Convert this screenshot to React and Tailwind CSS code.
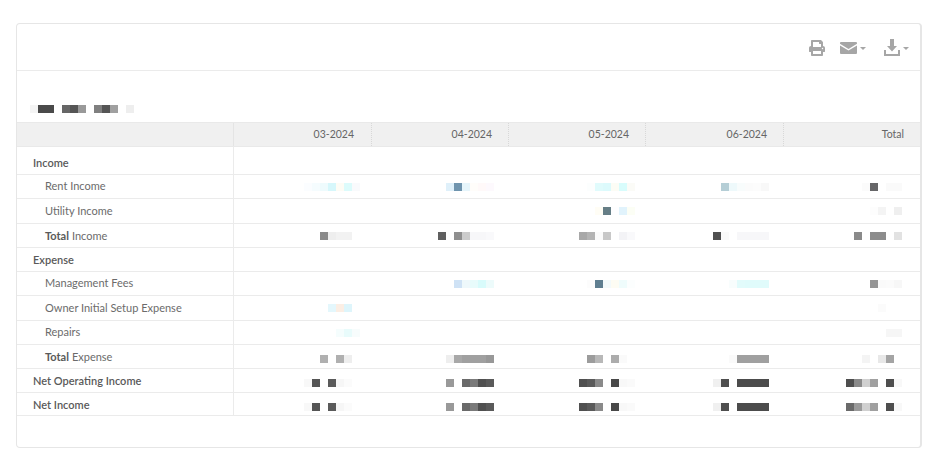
import React from 'react';
import { FaPrint } from 'react-icons/fa';

const rows = [
  { label: 'Income', type: 'section', height: 'h-[28px]', labelPad: 'pt-[5px]' },
  {
    label: 'Rent Income',
    height: 'h-[24px]',
    cells: [
      ['#fbfdff', '#f5fcfe', '#eefbfd', '#d6f7fb', '#fdfcf5', '#dcfbfb', '#f9fafc'],
      ['#dff0fa', '#6f94ae', '#e6f5fb', '#fffdfa', '#fff9f9', '#fdf9fd'],
      ['#fcfefe', '#e0fbfc', '#dcfafc', '#fcfcf5', '#d8fcfc', '#fbfbf7'],
      ['#b5ced6', '#eef9fb', '#f8fcfc', '#fbfbfb', '#fcfcfc', '#f8f8f8'],
      ['#fbfbfb', '#666668', '#ffffff', '#fafafa', '#fafafa'],
    ],
  },
  {
    label: 'Utility Income',
    height: 'h-[25px]',
    cells: [
      [],
      [],
      ['#fffdf5', '#667e86', '#fefeff', '#e1f3fc', '#fcfef5'],
      [],
      ['#fdfdfd', '#f4f4f4', '#ffffff', '#efefef'],
    ],
  },
  {
    label: 'Income',
    total: true,
    height: 'h-[24px]',
    labelPad: 'pt-[1px]',
    cells: [
      ['#8a8a8a', '#eeeeee', '#f2f2f2', '#f2f2f2', ''],
      ['#5f5f5f', '#ffffff', '#8f8f8f', '#cccccc', '#f7f7f9', '#f7f7f9', '#f9f9fb'],
      ['#a8a8a8', '#b4b4b4', '#fbfbfb', '#c8c8c8', '#ffffff', '#f3f3f6', '#f9f9fb'],
      ['#505050', '#fafafa', '#ffffff', '#f7f7f9', '#f7f7f9', '#f7f7f9', '#f7f7f9'],
      ['#8a8a8a', '#ffffff', '#8c8c8c', '#8c8c8c', '#ffffff', '#e2e2e2'],
    ],
  },
  { label: 'Expense', type: 'section', height: 'h-[24px]', labelPad: 'pt-[1px]' },
  {
    label: 'Management Fees',
    height: 'h-[24px]',
    cells: [
      [],
      ['#cfe2f5', '#eef8fb', '#e8fbfb', '#d8fbfb', '#edfbfb'],
      ['#fcfcfc', '#5f7e90', '#f3fafb', '#fdfcf3', '#effcfc', '#fcfefe'],
      ['#f8fdfd', '#e2fbfb', '#e0fbfb', '#e0fbfb', '#e0fbfb'],
      ['#959595', '#fafafa', '#fbfbfb', '#f7f7f7'],
    ],
  },
  {
    label: 'Owner Initial Setup Expense',
    height: 'h-[25px]',
    cells: [['#e4f7fc', '#fbeee4', '#def5fb', ''], [], [], [], ['#fbfbfb', '', '']],
  },
  {
    label: 'Repairs',
    height: 'h-[24px]',
    cells: [['#f5fdfd', '#e8fbfb', '#f7fcfc'], [], [], [], ['#f6f6f6', '#f6f6f6']],
  },
  {
    label: 'Expense',
    total: true,
    height: 'h-[24px]',
    labelPad: 'pt-[1px]',
    cellPad: 'pt-[5px]',
    cells: [
      ['#b0b0b0', '#ffffff', '#b0b0b0', '#eeeeee', ''],
      ['#eeeeee', '#a8a8a8', '#a0a0a0', '#a0a0a0', '#a0a0a0', '#989898'],
      ['#9c9c9c', '#b8b8b8', '#ffffff', '#acacac', '#fafafa', ''],
      ['#fafafa', '#a0a0a0', '#a0a0a0', '#a0a0a0', '#a0a0a0'],
      ['#f4f4f4', '#ffffff', '#e8e8e8', '#a4a4a4', ''],
    ],
  },
  {
    label: 'Net Operating Income',
    type: 'section',
    height: 'h-[24px]',
    labelPad: 'pt-[1px]',
    cellPad: 'pt-[5px]',
    cells: [
      ['#f8f8f8', '#555555', '#ffffff', '#5a5a5a', '#f6f6f6', '#fbfbfb', ''],
      ['#999999', '#ffffff', '#6a6a6a', '#7a7a7a', '#505050', '#5a5a5a'],
      ['#505050', '#5a5a5a', '#8a8a8a', '#ffffff', '#484848', '#f8f8f8', '#fafafa'],
      ['#f0f0f0', '#4e4e4e', '#ffffff', '#4c4c4c', '#4c4c4c', '#4c4c4c', '#4c4c4c'],
      ['#4e4e4e', '#8a8a8a', '#d0d0d0', '#a0a0a0', '#ffffff', '#4e4e4e', '#f8f8f8'],
    ],
  },
  {
    label: 'Net Income',
    type: 'section',
    height: 'h-[23px]',
    labelPad: 'pt-[2px]',
    cellPad: 'pt-[5px]',
    cells: [
      ['#f8f8f8', '#555555', '#ffffff', '#5a5a5a', '#f6f6f6', '#fbfbfb', ''],
      ['#999999', '#ffffff', '#6a6a6a', '#7a7a7a', '#505050', '#5a5a5a'],
      ['#505050', '#5a5a5a', '#8a8a8a', '#ffffff', '#484848', '#f8f8f8', '#fafafa'],
      ['#f0f0f0', '#4e4e4e', '#ffffff', '#4c4c4c', '#4c4c4c', '#4c4c4c', '#4c4c4c'],
      ['#6a6a6a', '#9a9a9a', '#d0d0d0', '#a0a0a0', '#ffffff', '#4e4e4e', '#f8f8f8'],
    ],
  },
];

const columns = ['03-2024', '04-2024', '05-2024', '06-2024', 'Total'];
// blurred figures sit a little differently from the header text in each column
const cellRight = ['pr-[12px]', 'pr-[15px]', 'pr-[11px]', 'pr-[15px]', 'pr-[18px]'];
const headRight = ['pr-[17px]', 'pr-[16px]', 'pr-[16px]', 'pr-[16px]', 'pr-[16px]'];
const gridCols = 'grid grid-cols-[217px_138px_137px_137px_138px_1fr]';

function Mosaic({ colors }) {
  return (
    <div className="flex">
      {colors.map((c, i) => (
        <span key={i} className="block w-[8px] h-[8px]" style={{ backgroundColor: c || 'transparent' }} />
      ))}
    </div>
  );
}

function Caret() {
  return <span className="ml-[3px] mt-[2px] w-0 h-0 border-x-[3px] border-x-transparent border-t-[3px] border-t-[#a6a6a6]" />;
}

function Toolbar() {
  return (
    <div className="h-[47px] border-b border-[#ebebeb] flex items-center justify-end pr-[11px] pt-[1px] text-[#a6a6a6]">
      <FaPrint className="w-[16px] h-[16px]" />
      <div className="flex items-center ml-[15px]">
        <svg width="17" height="12" viewBox="0 0 17 12" fill="currentColor">
          <path d="M1 0h15a1 1 0 0 1 1 1v.8L8.5 7 0 1.800V1a1 1 0 0 1 1-1z" />
          <path d="M0 3.400 8.500 8.600 17 3.400V11a1 1 0 0 1-1 1H1a1 1 0 0 1-1-1z" />
        </svg>
        <Caret />
      </div>
      <div className="flex items-center ml-[18px]">
        <svg width="16" height="17" viewBox="0 0 16 17" fill="currentColor">
          <path d="M6 0h4v7h3l-5 5.500L3 7h3z" />
          <path d="M0 11h2v4h12v-4h2v6H0z" />
        </svg>
        <Caret />
      </div>
    </div>
  );
}

function Row({ row }) {
  const isSection = row.type === 'section';
  return (
    <div className={`${gridCols} ${row.height} box-border border-b border-[#ebebeb]`}>
      <div
        className={`flex items-center border-r border-[#ebebeb] text-[11px] ${row.labelPad || ''} ${
          isSection ? 'pl-[16px] font-semibold text-[#5a5a5a]' : 'pl-[28px] text-[#6b6b6b]'
        }`}
      >
        {row.total && <span className="font-bold text-[#5a5a5a] mr-[3px]">Total</span>}
        {row.label}
      </div>
      {columns.map((col, i) => (
        <div key={col} className={`flex items-center justify-end ${cellRight[i]} ${row.cellPad || ''}`}>
          {row.cells && <Mosaic colors={row.cells[i]} />}
        </div>
      ))}
    </div>
  );
}

export default function App() {
  return (
    <div className="w-[936px] h-[466px] bg-white pt-[23px] pl-[16px] font-['Lato',sans-serif]">
      <div className="w-[906px] h-[425px] box-border border border-[#e6e6e6] border-r-2 rounded-[4px] flex flex-col">
        <Toolbar />
        <div className="h-[51px] flex items-end pl-[13px] pb-[9px]">
          <Mosaic colors={['#f4f4f4', '#4a4a4a', '#4a4a4a', '#ffffff', '#666666', '#555555', '#999999', '#ffffff', '#808080', '#555555', '#a0a0a0', '#ffffff', '#eeeeee']} />
        </div>
        <div className={`${gridCols} h-[25px] bg-[#f0f0f0] border-y border-[#e9e9e9] text-[10.5px] text-[#666]`}>
          <div className="border-r border-[#e4e4e4]" />
          {columns.map((col, i) => (
            <div
              key={col}
              className={`flex items-center justify-end ${headRight[i]} ${
                i < 4 ? 'border-r border-dotted border-[#d8d8d8]' : ''
              }`}
            >
              {col}
            </div>
          ))}
        </div>
        {rows.map((row, i) => (
          <Row key={i} row={row} />
        ))}
      </div>
    </div>
  );
}
